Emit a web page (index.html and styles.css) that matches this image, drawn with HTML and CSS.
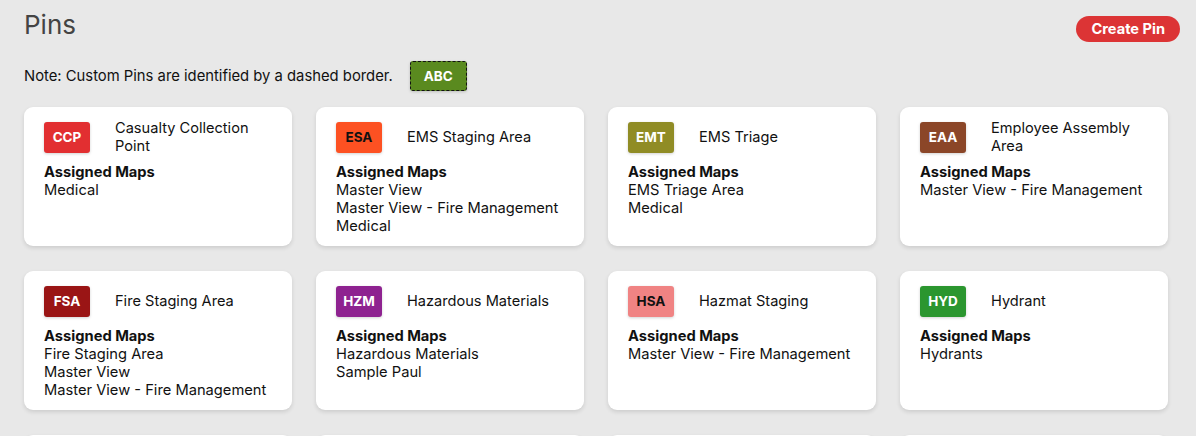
FILE: index.html
```html
<!DOCTYPE html>
<html lang="en">
<head>
<meta charset="utf-8">
<title>Pins</title>
<link rel="stylesheet" href="styles.css">
</head>
<body>
<div class="page">
  <header class="top">
    <h1 class="title">Pins</h1>
    <button class="create">Create Pin</button>
  </header>
  <div class="note">
    <span>Note: Custom Pins are identified by a dashed border.</span>
    <span class="badge custom" style="background:#5a8a1f;color:#fff">ABC</span>
  </div>
  <div class="grid">
    <div class="card">
      <div class="head"><span class="badge" style="background:#e22f31;color:#fff">CCP</span><span class="name">Casualty Collection Point</span></div>
      <div class="label">Assigned Maps</div>
      <div class="map">Medical</div>
    </div>
    <div class="card">
      <div class="head"><span class="badge" style="background:#fd5122;color:#111">ESA</span><span class="name">EMS Staging Area</span></div>
      <div class="label">Assigned Maps</div>
      <div class="map">Master View</div>
      <div class="map">Master View - Fire Management</div>
      <div class="map">Medical</div>
    </div>
    <div class="card">
      <div class="head"><span class="badge" style="background:#908c25;color:#fff">EMT</span><span class="name">EMS Triage</span></div>
      <div class="label">Assigned Maps</div>
      <div class="map">EMS Triage Area</div>
      <div class="map">Medical</div>
    </div>
    <div class="card">
      <div class="head"><span class="badge" style="background:#8b4628;color:#fff">EAA</span><span class="name">Employee Assembly Area</span></div>
      <div class="label">Assigned Maps</div>
      <div class="map">Master View - Fire Management</div>
    </div>
    <div class="card">
      <div class="head"><span class="badge" style="background:#9a1515;color:#fff">FSA</span><span class="name">Fire Staging Area</span></div>
      <div class="label">Assigned Maps</div>
      <div class="map">Fire Staging Area</div>
      <div class="map">Master View</div>
      <div class="map">Master View - Fire Management</div>
    </div>
    <div class="card">
      <div class="head"><span class="badge" style="background:#8e2290;color:#fff">HZM</span><span class="name">Hazardous Materials</span></div>
      <div class="label">Assigned Maps</div>
      <div class="map">Hazardous Materials</div>
      <div class="map">Sample Paul</div>
    </div>
    <div class="card">
      <div class="head"><span class="badge" style="background:#f08383;color:#111">HSA</span><span class="name">Hazmat Staging</span></div>
      <div class="label">Assigned Maps</div>
      <div class="map">Master View - Fire Management</div>
    </div>
    <div class="card">
      <div class="head"><span class="badge" style="background:#2b962f;color:#fff">HYD</span><span class="name">Hydrant</span></div>
      <div class="label">Assigned Maps</div>
      <div class="map">Hydrants</div>
    </div>
    <div class="card"></div>
    <div class="card"></div>
    <div class="card"></div>
    <div class="card"></div>
  </div>
</div>
</body>
</html>
```
FILE: styles.css
```css
* { box-sizing: border-box; }
html, body { margin: 0; padding: 0; }
body {
  background: #e8e8e8;
  font-family: "Inter", "Liberation Sans", sans-serif;
  color: #111;
}
.page { padding: 10px 28px 0 24px; }
.top {
  display: flex;
  justify-content: space-between;
  align-items: flex-start;
  height: 44px;
}
.title {
  margin: 0;
  font-size: 26px;
  font-weight: 400;
  color: #444;
  line-height: 30px;
}
.create {
  margin: 6px -12px 0 0;
  height: 26px;
  padding: 0 15px;
  border: none;
  border-radius: 13px;
  background: #dc3435;
  color: #fff;
  font-family: inherit;
  font-weight: 700;
  font-size: 14.6px;
}
.note {
  display: flex;
  align-items: center;
  gap: 17px;
  font-size: 14.8px;
  height: 38px;
  margin-top: 3px;
}
.grid {
  margin-top: 12px;
  display: grid;
  grid-template-columns: repeat(4, 268px);
  column-gap: 24px;
  row-gap: 25px;
}
.card {
  background: #fff;
  border-radius: 9px;
  box-shadow: 0 2px 4px rgba(0,0,0,0.12);
  padding: 12px 20px 11px;
  min-height: 139px;
}
.head {
  display: flex;
  align-items: center;
  height: 36px;
  gap: 25px;
  margin-bottom: 8px;
}
.badge {
  flex: none;
  display: flex;
  align-items: center;
  justify-content: center;
  width: 46px;
  height: 31px;
  border-radius: 3px;
  font-weight: 700;
  font-size: 13.5px;
  box-shadow: 0 1px 3px rgba(0,0,0,0.18);
}
.badge.custom {
  width: 57px;
  height: 30px;
  border: 1px dashed #111;
}
.name {
  font-size: 14.6px;
  line-height: 18px;
}
.label {
  font-weight: 700;
  font-size: 14.7px;
  line-height: 18px;
}
.map {
  font-size: 14.7px;
  line-height: 18px;
}
```
